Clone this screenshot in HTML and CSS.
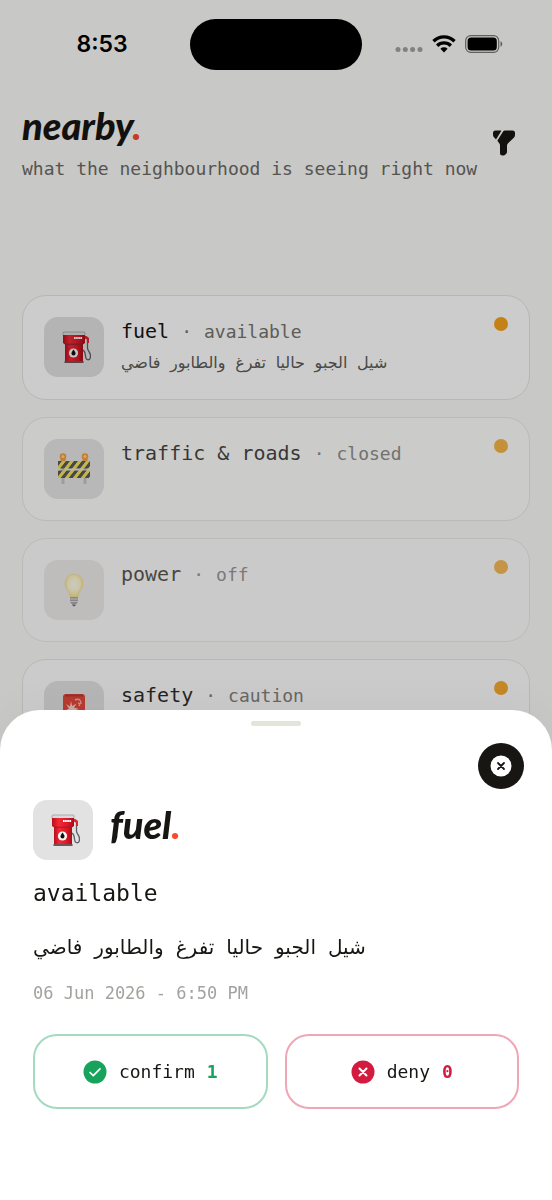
FILE: index.html
```html
<!DOCTYPE html>
<html lang="en">
<head>
<meta charset="utf-8">
<meta name="viewport" content="width=device-width, initial-scale=1">
<title>nearby</title>
<link rel="stylesheet" href="styles.css">
</head>
<body>
<svg class="defs" aria-hidden="true">
  <defs>
    <linearGradient id="red" x1="0" y1="0" x2="1" y2="0">
      <stop offset="0" stop-color="#b80f1c"/><stop offset=".3" stop-color="#f02a36"/><stop offset=".7" stop-color="#dc1826"/><stop offset="1" stop-color="#a80c18"/>
    </linearGradient>
    <radialGradient id="glow" cx=".5" cy=".45" r=".6">
      <stop offset="0" stop-color="#fffef2"/><stop offset=".5" stop-color="#fff6c4"/><stop offset="1" stop-color="#f3d64e"/>
    </radialGradient>
    <pattern id="stripes" width="8" height="8" patternUnits="userSpaceOnUse" patternTransform="skewX(-38)">
      <rect width="8" height="8" fill="#f3df35"/><rect width="4" height="8" fill="#35332e"/>
    </pattern>
    <symbol id="pump" viewBox="-2 -1 33 34">
      <path d="M25 6.500l2.500 1.500v9c0 3 3 4 3 8 0 5-4.500 5-5 0-.3-3-.5-6-3.500-6" fill="none" stroke="#5d5f66" stroke-width="1.300"/>
      <path d="M24 5h2.500l2.500 2v5h-2V8.500L24 7z" fill="#e02530"/>
      <rect x="3" y="1" width="22" height="4" rx="1" fill="#d9dadd" stroke="#777" stroke-width=".5"/>
      <path d="M3 4h22v8l-2 1.500H5L3 12z" fill="url(#red)"/>
      <path d="M5 13.500h18V31H5z" fill="url(#red)"/>
      <path d="M5 13.300h18" stroke="#7e0b14" stroke-width=".8"/>
      <rect x="4.500" y="30" width="19" height="2" fill="#72535a"/>
      <path d="M14 7h8.500" stroke="#fff" stroke-width="2" stroke-dasharray="1.700 .4"/>
      <circle cx="13.500" cy="22" r="4.600" fill="#f6f6f6"/>
      <path d="M13.500 18.500c1.300 1.700 2 2.700 2 3.900a2 2 0 0 1-4 0c0-1.200.7-2.200 2-3.900z" fill="#111"/>
    </symbol>
    <symbol id="barrier" viewBox="0 0 34 34">
      <path d="M6 8v24M28 8v24" stroke="#b9b9b9" stroke-width="3"/>
      <rect x="1" y="9" width="32" height="7.500" fill="url(#stripes)"/>
      <rect x="1" y="18.500" width="32" height="7.500" fill="url(#stripes)"/>
      <circle cx="6" cy="4.500" r="3.300" fill="#f58a12"/><circle cx="28" cy="4.500" r="3.300" fill="#f58a12"/>
      <circle cx="6" cy="4.500" r="1.500" fill="#ffd35a"/><circle cx="28" cy="4.500" r="1.500" fill="#ffd35a"/>
      <path d="M3.500 8h5M25.500 8h5" stroke="#ee8c18" stroke-width="2"/>
    </symbol>
    <symbol id="bulb" viewBox="0 0 20 34">
      <path d="M10 1a9 9 0 0 0-9 9c0 6 4.500 8 5.500 14h7C14.500 18 19 16 19 10a9 9 0 0 0-9-9z" fill="url(#glow)" stroke="#e8cf5a" stroke-width=".6"/>
      <path d="M6 24h8v5l-2.500 3h-3L6 29z" fill="#8e8e8e"/>
      <path d="M6 26h8M6 28.500h8" stroke="#d6d6d6" stroke-width="1"/>
      <path d="M8 32h4l-2 1.500z" fill="#333"/>
    </symbol>
    <symbol id="siren" viewBox="0 0 30 34">
      <rect x="4" y="0" width="22" height="25" rx="3" fill="#e63528"/>
      <path d="M6 1.500h18" stroke="#b3281e" stroke-width="2"/>
      <path d="M12 7l1.200 5 4.300-2.500-2.500 4 5 1.500-5 1.500 2 4-4-2.500-2 4-1-4.500-4-1 4-2-3-4.500 4 2.500z" fill="#ffd0c8"/>
      <path d="M16 6c4-2 6 0 6 4M19 9c2 0 2 2 1 3" fill="none" stroke="#ffaaa0" stroke-width="1.500"/>
      <rect x="2" y="25" width="26" height="7" rx="2" fill="#777"/>
    </symbol>
  </defs>
</svg>

<main class="feed">
  <div class="status">
    <span class="time">8:53</span>
    <span class="island"></span>
    <span class="signals">
      <svg width="28" height="6" viewBox="0 0 28 6" fill="#a3a2a1"><circle cx="3" cy="2.500" r="2.500"/><circle cx="10.300" cy="2.500" r="2.500"/><circle cx="17.600" cy="2.500" r="2.500"/><circle cx="25" cy="2.500" r="2.500"/></svg>
      <svg width="24" height="18" viewBox="0 0 24 18" fill="none" stroke="#000" stroke-width="3.400"><path d="M1.500 6.200a15 15 0 0 1 21 0"/><path d="M5.200 10.700a9.600 9.600 0 0 1 13.600 0"/><path d="M8.400 13.800a5.200 5.200 0 0 1 7.200 0L12 17.500z" fill="#000" stroke="none"/></svg>
      <svg width="38" height="18" viewBox="0 0 38 18"><rect x=".7" y=".7" width="33" height="16.600" rx="5" fill="none" stroke="#777" stroke-width="1.200"/><rect x="2.600" y="2.600" width="29.200" height="12.800" rx="3.500" fill="#000"/><path d="M35.500 6.300c2.300.8 2.300 4.600 0 5.400z" fill="#777"/></svg>
    </span>
  </div>

  <header class="head">
    <div>
      <h1 class="brand">nearby<span class="point">.</span></h1>
      <p class="tagline">what the neighbourhood is seeing right now</p>
    </div>
    <button class="filter" type="button" aria-label="Filter">
      <svg width="24" height="26" viewBox="0 0 24 26" fill="#171612"><path d="M3.500.5h5.200q.9 0 .4.800L4.500 8.800q-.4.600-.9.200L2 7.300Q1 6.200 1 4.700V3Q1 .5 3.500.5z"/><path d="M13 .5h7.500Q23 .5 23 3v2q0 1.600-1.200 2.700l-5 4.700Q15 14 15 15.500V22q0 1.200-1 2l-1.200.9q-1 .6-2.200.6-2.600 0-2.600-2.500v-7.500q0-1.200-.8-2.200L5.700 11.300q-.4-.6 0-1.200L11.300 1.200Q11.800.5 13 .5z"/></svg>
    </button>
  </header>

  <section class="cards">
    <article class="card">
      <span class="tile"><svg width="33" height="34"><use href="#pump"/></svg></span>
      <div class="info">
        <h2 class="line"><span class="kind">fuel</span><span class="state">·</span><span class="state">available</span></h2>
        <p class="note" lang="ar">شيل الجبو حاليا تفرغ والطابور فاضي</p>
      </div>
      <span class="dot"></span>
    </article>
    <article class="card aged">
      <span class="tile"><svg width="34" height="34"><use href="#barrier"/></svg></span>
      <div class="info">
        <h2 class="line"><span class="kind">traffic &amp; roads</span><span class="state">·</span><span class="state">closed</span></h2>
      </div>
      <span class="dot"></span>
    </article>
    <article class="card old">
      <span class="tile"><svg width="20" height="34"><use href="#bulb"/></svg></span>
      <div class="info">
        <h2 class="line"><span class="kind">power</span><span class="state">·</span><span class="state">off</span></h2>
      </div>
      <span class="dot"></span>
    </article>
    <article class="card recent">
      <span class="tile"><svg width="30" height="34"><use href="#siren"/></svg></span>
      <div class="info">
        <h2 class="line"><span class="kind">safety</span><span class="state">·</span><span class="state">caution</span></h2>
      </div>
      <span class="dot"></span>
    </article>
  </section>
</main>

<div class="scrim"></div>

<section class="sheet" role="dialog" aria-labelledby="sheet-title">
  <div class="grip"></div>
  <button class="close" type="button" aria-label="Close">
    <svg width="22" height="22" viewBox="0 0 22 22"><circle cx="11" cy="11" r="10.500" fill="#fff"/><path d="M8 8l6 6M14 8l-6 6" stroke="#171612" stroke-width="1.800" stroke-linecap="round"/></svg>
  </button>
  <div class="detail">
    <div class="subject">
      <span class="tile"><svg width="33" height="34"><use href="#pump"/></svg></span>
      <h2 class="brand" id="sheet-title">fuel<span class="point">.</span></h2>
    </div>
    <p class="condition">available</p>
    <p class="message" lang="ar">شيل الجبو حاليا تفرغ والطابور فاضي</p>
    <time class="date" datetime="2026-06-06T18:50">06 Jun 2026 - 6:50 PM</time>
    <div class="votes">
      <button class="vote yes" type="button">
        <svg width="24" height="24" viewBox="0 0 24 24"><circle cx="12" cy="12" r="11.500" fill="#18a35c"/><path d="M7 12.500l3.300 3.200L17 8.800" fill="none" stroke="#fff" stroke-width="1.700" stroke-linecap="round" stroke-linejoin="round"/></svg>
        <span>confirm</span><span class="count">1</span>
      </button>
      <button class="vote no" type="button">
        <svg width="24" height="24" viewBox="0 0 24 24"><circle cx="12" cy="12" r="11.500" fill="#d31b3f"/><path d="M8.500 8.500l7 7M15.500 8.500l-7 7" stroke="#fff" stroke-width="2" stroke-linecap="round"/></svg>
        <span>deny</span><span class="count">0</span>
      </button>
    </div>
  </div>
</section>
</body>
</html>
```

FILE: styles.css
```css
* {
  box-sizing: border-box;
}

body {
  margin: 0;
  height: 100vh;
  overflow: hidden;
  background: #fbfaf8;
  color: #171612;
  font-family: "DejaVu Sans Mono", monospace;
  font-size: 18px;
}

h1,
h2,
p {
  margin: 0;
  font-weight: 400;
}

svg {
  display: block;
  flex: none;
}

button {
  padding: 0;
  border: 0;
  background: none;
  color: inherit;
  font: inherit;
}

.defs {
  position: absolute;
  width: 0;
  height: 0;
}

.status {
  display: grid;
  grid-template-columns: 1fr 172px 1fr;
  align-items: center;
  height: 88px;
}

.time {
  padding-left: 14px;
  text-align: center;
  color: #000;
  font: 600 23px/28px Inter, sans-serif;
}

.island {
  height: 51px;
  border-radius: 26px;
  background: #000;
}

.signals {
  display: flex;
  justify-content: center;
  align-items: flex-end;
  gap: 9px;
  padding-right: 16px;
}

.head {
  display: flex;
  justify-content: space-between;
  align-items: center;
  padding: 13px 36px 0 22px;
}

.brand {
  font: italic 900 38px/48px Lato, sans-serif;
}

.point {
  color: #fb4a2b;
}

.tagline {
  padding-top: 4px;
  line-height: 32px;
  color: #6b6a66;
  white-space: nowrap;
}

.filter {
  padding: 4px 0;
}

.cards {
  display: grid;
  gap: 17px;
  padding: 110px 22px 0;
}

.card {
  display: flex;
  align-items: flex-start;
  gap: 17px;
  min-height: 104px;
  padding: 21px;
  border: 1px solid #e6e5df;
  border-radius: 24px;
  background: #fff;
}

.aged {
  opacity: 0.8;
}

.old {
  opacity: 0.72;
}

.recent {
  opacity: 0.9;
}

.tile {
  display: flex;
  flex: none;
  align-items: center;
  justify-content: center;
  width: 60px;
  height: 60px;
  border-radius: 14px;
  background: #e2e2e2;
}

.old .tile {
  background: #ebe9e7;
}

.info {
  flex: 1;
  min-width: 0;
}

.line {
  display: flex;
  align-items: baseline;
  gap: 12px;
  font-size: 18px;
  line-height: 28px;
}

.kind {
  font-size: 20px;
}

.state {
  color: #757470;
}

.note,
.message {
  font-family: "Liberation Mono", "DejaVu Sans", sans-serif;
}

.note {
  padding-top: 4px;
  font-size: 16px;
  line-height: 28px;
  color: #5c5b57;
}

.dot {
  flex: none;
  width: 14px;
  height: 14px;
  border-radius: 50%;
  background: #f5a31c;
}

.scrim {
  position: fixed;
  inset: 0;
  background: rgba(0, 0, 0, 0.2);
}

.sheet {
  position: fixed;
  right: 0;
  bottom: 0;
  left: 0;
  display: flex;
  flex-direction: column;
  padding: 11px 28px 91px;
  border-radius: 40px 40px 0 0;
  background: #fff;
  box-shadow: 0 -8px 40px rgba(0, 0, 0, 0.03);
}

.grip {
  align-self: center;
  width: 50px;
  height: 5px;
  border-radius: 3px;
  background: #e4e4da;
}

.close {
  display: flex;
  align-items: center;
  justify-content: center;
  align-self: flex-end;
  width: 46px;
  height: 46px;
  margin: 17px 0 11px;
  border-radius: 50%;
  background: #171612;
}

.detail {
  display: flex;
  flex-direction: column;
  padding: 0 5px;
}

.subject {
  display: flex;
  align-items: center;
  gap: 17px;
}

.subject .brand {
  padding-bottom: 12px;
}

.condition {
  margin-top: 18px;
  font-size: 23px;
  line-height: 30px;
}

.message {
  margin-top: 26px;
  font-size: 20px;
  line-height: 30px;
}

.date {
  margin-top: 17px;
  font-size: 17px;
  line-height: 24px;
  color: #a3a29e;
}

.votes {
  display: grid;
  grid-template-columns: 1fr 1fr;
  gap: 17px;
  margin-top: 29px;
}

.vote {
  display: flex;
  align-items: center;
  justify-content: center;
  gap: 12px;
  height: 75px;
  border: 2px solid;
  border-radius: 24px;
}

.yes {
  border-color: #a3dac0;
}

.no {
  border-color: #efa6b5;
}

.count {
  font-weight: 700;
}

.yes .count {
  color: #18a35c;
}

.no .count {
  color: #d31b3f;
}
```
